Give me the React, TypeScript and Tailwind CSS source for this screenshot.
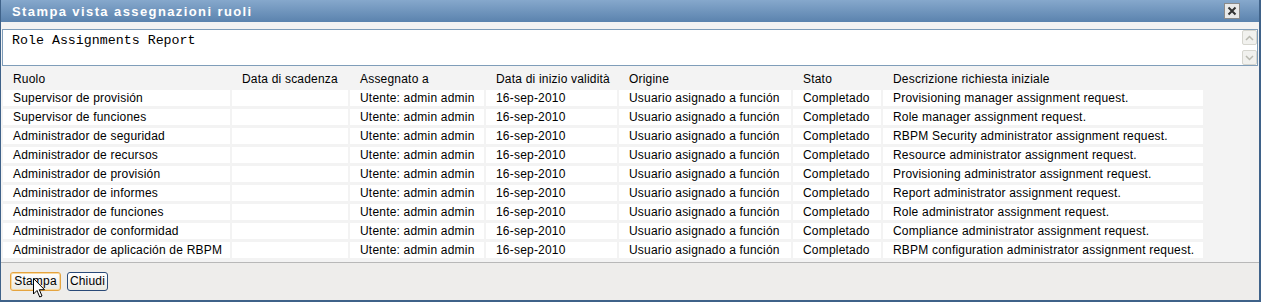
import React from "react";

const rows: string[][] = [
  ["Supervisor de provisión", "", "Utente: admin admin", "16-sep-2010", "Usuario asignado a función", "Completado", "Provisioning manager assignment request."],
  ["Supervisor de funciones", "", "Utente: admin admin", "16-sep-2010", "Usuario asignado a función", "Completado", "Role manager assignment request."],
  ["Administrador de seguridad", "", "Utente: admin admin", "16-sep-2010", "Usuario asignado a función", "Completado", "RBPM Security administrator assignment request."],
  ["Administrador de recursos", "", "Utente: admin admin", "16-sep-2010", "Usuario asignado a función", "Completado", "Resource administrator assignment request."],
  ["Administrador de provisión", "", "Utente: admin admin", "16-sep-2010", "Usuario asignado a función", "Completado", "Provisioning administrator assignment request."],
  ["Administrador de informes", "", "Utente: admin admin", "16-sep-2010", "Usuario asignado a función", "Completado", "Report administrator assignment request."],
  ["Administrador de funciones", "", "Utente: admin admin", "16-sep-2010", "Usuario asignado a función", "Completado", "Role administrator assignment request."],
  ["Administrador de conformidad", "", "Utente: admin admin", "16-sep-2010", "Usuario asignado a función", "Completado", "Compliance administrator assignment request."],
  ["Administrador de aplicación de RBPM", "", "Utente: admin admin", "16-sep-2010", "Usuario asignado a función", "Completado", "RBPM configuration administrator assignment request."],
];

const headers = ["Ruolo", "Data di scadenza", "Assegnato a", "Data di inizio validità", "Origine", "Stato", "Descrizione richiesta iniziale"];

export default function App() {
  return (
    <div className="relative w-[1261px] h-[302px] flex flex-col bg-[#f3f3f3] border-l border-r-2 border-b-2 border-[#3f6289] text-black" style={{ fontFamily: '"Liberation Sans", Arial, sans-serif' }}>
      {/* Title bar */}
      <div className="h-[22px] shrink-0 flex items-center justify-between pl-[11px] pr-[19px] bg-gradient-to-b from-[#86a8cc] to-[#5b83ae]">
        <span className="text-white font-bold text-[13px] tracking-[1.4px] leading-none">Stampa vista assegnazioni ruoli</span>
        <div className="w-[16px] h-[16px] bg-[#e9e9e9] border border-[#8a8a8a] flex items-center justify-center">
          <svg width="10" height="10" viewBox="0 0 10 10">
            <path d="M1.5 1.5 L8.5 8.5 M8.5 1.5 L1.5 8.5" stroke="#333" strokeWidth="2" />
          </svg>
        </div>
      </div>
      {/* band */}
      <div className="h-[7px] shrink-0" />
      {/* textarea */}
      <div className="h-[37px] shrink-0 ml-[1px] mr-[1px] bg-white border border-[#7f9db9] flex justify-between">
        <div className="pl-[9px] pt-[3px] text-[13.3px] leading-[16px]" style={{ fontFamily: '"Liberation Mono", "Courier New", monospace' }}>
          Role Assignments Report
        </div>
        <div className="w-[15px] flex flex-col justify-between">
          <div className="h-[15px] bg-[#f1f1ee] border border-[#d6d6cf] rounded-[2px] flex items-center justify-center">
            <svg width="9" height="6" viewBox="0 0 9 6"><path d="M1 5 L4.5 1.5 L8 5" stroke="#b9b9b0" strokeWidth="1.5" fill="none" /></svg>
          </div>
          <div className="h-[15px] bg-[#f1f1ee] border border-[#d6d6cf] rounded-[2px] flex items-center justify-center">
            <svg width="9" height="6" viewBox="0 0 9 6"><path d="M1 1 L4.5 4.5 L8 1" stroke="#b9b9b0" strokeWidth="1.5" fill="none" /></svg>
          </div>
        </div>
      </div>
      {/* table */}
      <div className="flex-1 pt-[5px] pl-[2px]">
        <div className="grid grid-cols-[227px_116px_134px_131px_172px_88px_320px] gap-x-[2px] gap-y-[3px] auto-rows-[16px] text-[12px] leading-[16px] tracking-[0.2px]">
          {headers.map((h) => (
            <div key={h} className="pl-[10px] whitespace-nowrap">{h}</div>
          ))}
          {rows.map((r, i) =>
            r.map((c, j) => (
              <div key={i + "-" + j} className="bg-white pl-[10px] whitespace-nowrap overflow-hidden">{c}</div>
            ))
          )}
        </div>
      </div>
      {/* footer */}
      <div className="h-[38px] shrink-0 border-t border-[#b8b8b8] bg-[#eeedeb] flex items-start gap-[6px] pl-[9px] pt-[9px]">
        <button className="w-[51px] h-[19px] rounded-[3px] border border-[#e5a43f] bg-gradient-to-b from-[#ffffff] to-[#e9e8e2] text-[12px] leading-[17px] text-black shadow-[inset_0_0_0_1px_#f8d9a0] tracking-[0.2px]">Stampa</button>
        <button className="w-[41px] h-[19px] rounded-[3px] border border-[#2a4a78] bg-gradient-to-b from-[#ffffff] to-[#e9e8e2] text-[12px] leading-[17px] text-black tracking-[0.2px]">Chiudi</button>
      </div>
      {/* cursor */}
      <svg className="absolute left-[32px] top-[278px]" width="13" height="21" viewBox="0 0 13 21">
        <path d="M0.5 0.5 L0.5 16 L4 12.5 L6.7 19 L9 18 L6.3 11.7 L11.5 11.7 Z" fill="#fff" stroke="#000" strokeWidth="1" strokeLinejoin="miter" />
      </svg>
    </div>
  );
}
